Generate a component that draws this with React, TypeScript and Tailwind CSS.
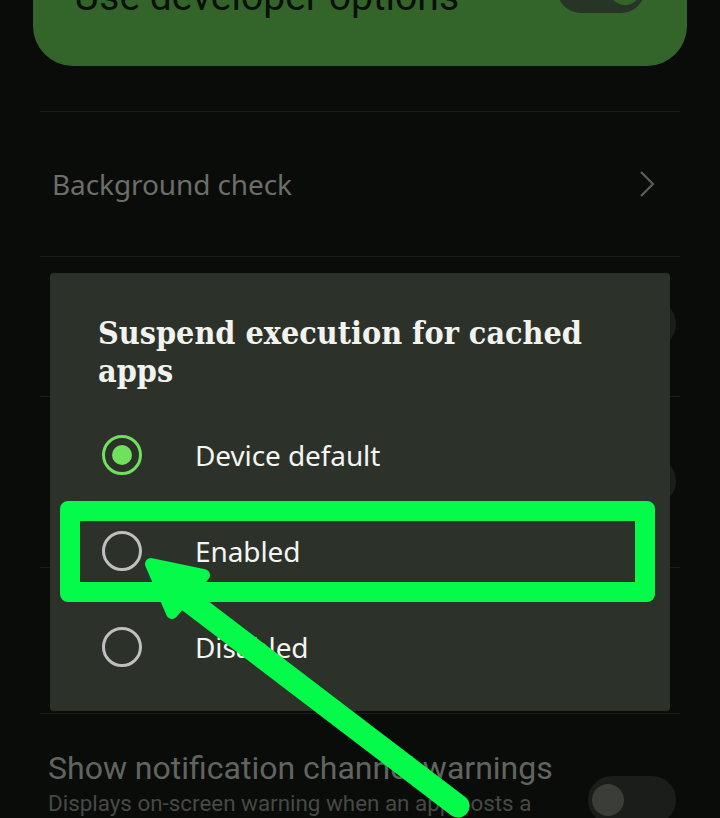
import React from 'react';

function Toggle({ on = false, className = '' }: { on?: boolean; className?: string }) {
  return (
    <div className={`flex h-[48px] w-[88px] shrink-0 items-center rounded-full px-[4px] ${on ? 'justify-end bg-[#263526]' : 'justify-start bg-[#1b1d1a]'} ${className}`}>
      <div className={`h-[32px] w-[32px] rounded-full ${on ? 'bg-[#33652a]' : 'bg-[#3a3d38]'}`} />
    </div>
  );
}

function Radio({ checked }: { checked: boolean }) {
  return checked ? (
    <div className="flex h-[40px] w-[40px] shrink-0 items-center justify-center rounded-full border-[3px] border-[#6fe15c]">
      <div className="h-[20px] w-[20px] rounded-full bg-[#6fe15c]" />
    </div>
  ) : (
    <div className="h-[40px] w-[40px] shrink-0 rounded-full border-[3px] border-[#bfc0bd]" />
  );
}

const options = [
  { label: 'Device default', checked: true },
  { label: 'Enabled', checked: false },
  { label: 'Disabled', checked: false },
];

export default function App() {
  return (
    <div className="relative h-[818px] w-[720px] overflow-hidden bg-[#0a0c09] font-['Noto_Sans',sans-serif]">
      {/* developer options card, scrolled up */}
      <div className="mx-[33px] -mt-[54px] flex h-[120px] items-start justify-between rounded-[40px] bg-[#33652a] pl-[41px] pr-[42px] pt-[31px]">
        <span className="font-['Roboto',sans-serif] text-[39px] leading-[40px] text-[#0b0f0a]">Use developer options</span>
        <Toggle on className="-mt-[12px]" />
      </div>

      <div className="mx-[40px] mt-[45px]">
        <div className="flex h-[145px] items-center justify-between border-t border-[#1a1d19] pl-[12px] pr-[24px]">
          <span className="text-[28px] tracking-[-0.1px] text-[#6c6e69] [font-stretch:87.5%]">Background check</span>
          <svg width="18" height="28" viewBox="0 0 18 28" fill="none" stroke="#5c5e5a" strokeWidth="2.2">
            <path d="M3 2l12 12L3 26" />
          </svg>
        </div>
        <div className="flex h-[140px] items-center justify-end border-t border-[#1a1d19] pt-[2px]">
          <Toggle className="mr-[4px] -mt-[8px]" />
        </div>
        <div className="flex h-[171px] items-center justify-end border-t border-[#1a1d19]">
          <Toggle className="mr-[4px] -mt-[2px]" />
        </div>
        <div className="h-[146px] border-t border-[#1a1d19]" />
        <div className="flex items-start justify-between border-t border-[#1a1d19] pt-[34px]">
          <div className="ml-[8px] flex flex-col">
            <span className="font-['Roboto',sans-serif] text-[32px] leading-[40px] text-[#626461]">Show notification channel warnings</span>
            <span className="font-['Roboto',sans-serif] text-[22.4px] leading-[30px] text-[#474946]">Displays on-screen warning when an app posts a</span>
          </div>
          <Toggle className="mr-[4px] mt-[28px]" />
        </div>
      </div>

      {/* dialog */}
      <div className="absolute left-[50px] top-[273px] flex h-[438px] w-[620px] flex-col rounded-[4px] bg-[#2c3229] pb-[16px]">
        <h2 className="pl-[48px] pr-[30px] pt-[41px] font-['DejaVu_Serif',serif] text-[32px] font-bold leading-[38px] text-[#f2f2ef] [font-stretch:condensed]">
          Suspend execution for cached apps
        </h2>
        <div className="mt-auto flex flex-col">
          {options.map((o) => (
            <div key={o.label} className="flex h-[96px] items-center gap-[53px] pl-[52px]">
              <Radio checked={o.checked} />
              <span className="text-[28px] tracking-[-0.1px] text-[#f4f4f2] [font-stretch:87.5%]">{o.label}</span>
            </div>
          ))}
        </div>
      </div>

      {/* annotation */}
      <div className="pointer-events-none absolute left-[60px] top-[501px] h-[101px] w-[595px] rounded-[8px] border-[20px] border-[#05fb4a]" />
      <svg className="pointer-events-none absolute inset-0" width="720" height="818" viewBox="0 0 720 818">
        <line x1="168" y1="585" x2="458" y2="806" stroke="#05fb4a" strokeWidth="23" strokeLinecap="round" />
        <polygon points="151,564 204,575 172,613" fill="#05fb4a" stroke="#05fb4a" strokeWidth="12" strokeLinejoin="round" />
      </svg>
    </div>
  );
}
